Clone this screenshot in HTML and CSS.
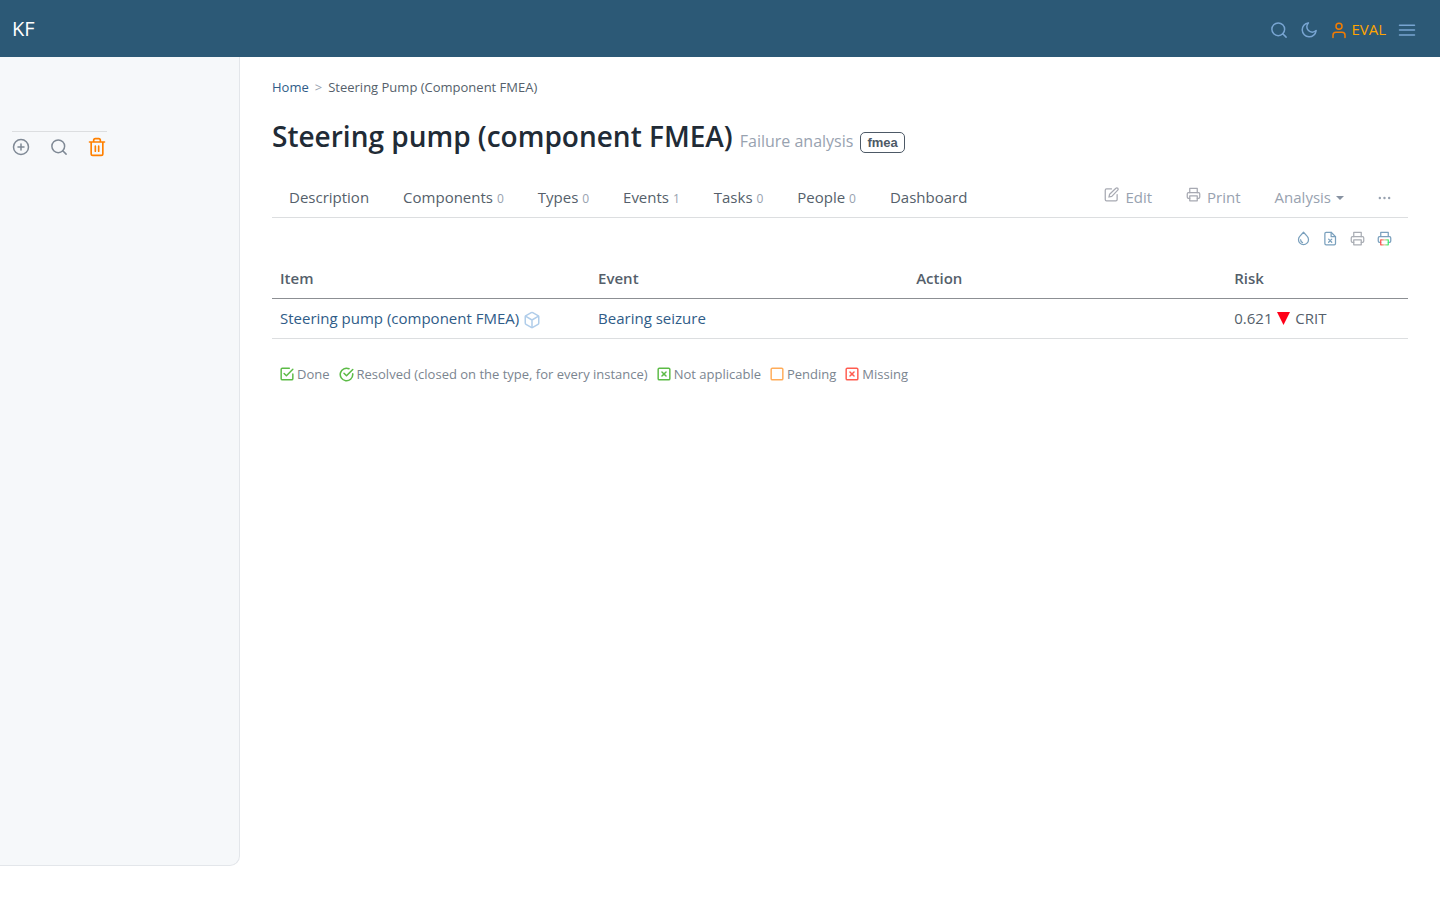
FILE: index.html
```html
<!DOCTYPE html>
<html lang="en">
<head>
    <meta charset="UTF-8">
    <meta name="viewport" content="width=device-width, initial-scale=1.0">
    <title>Steering pump (component FMEA)</title>
    <link rel="stylesheet" href="styles.css">
</head>
<body>
    <!-- shared icons -->
    <svg class="sprite" aria-hidden="true">
        <symbol id="i-search" viewBox="0 0 24 24"><circle cx="11" cy="11" r="8.500"/><path d="M21.500 21.500l-4.500-4.500"/></symbol>
        <symbol id="i-printer" viewBox="0 0 24 24"><path d="M6 9V2h12v7"/><path d="M6 18H4a2 2 0 0 1-2-2v-5a2 2 0 0 1 2-2h16a2 2 0 0 1 2 2v5a2 2 0 0 1-2 2h-2"/><rect x="6" y="14" width="12" height="8"/></symbol>
        <symbol id="i-xsquare" viewBox="0 0 24 24"><rect x="2" y="2" width="20" height="20" rx="2"/><path d="M8.500 8.500l7 7M15.500 8.500l-7 7"/></symbol>
    </svg>

    <header class="topbar">
        <a class="brand" href="#">KF</a>
        <nav class="topnav">
            <button aria-label="Search"><svg class="icon"><use href="#i-search"/></svg></button>
            <button aria-label="Dark mode"><svg class="icon" viewBox="0 0 24 24"><path d="M21.500 12.790A9.300 9.300 0 1 1 11.210 2.500 7.200 7.200 0 0 0 21.500 12.790z"/></svg></button>
            <a class="user" href="#"><svg class="icon" viewBox="0 0 24 24"><path d="M20 22v-3a4 4 0 0 0-4-4H8a4 4 0 0 0-4 4v3"/><circle cx="12" cy="7" r="4"/></svg>EVAL</a>
            <button aria-label="Menu"><svg class="icon" viewBox="0 0 24 24"><path d="M2 5.500h20M2 12h20M2 18.500h20"/></svg></button>
        </nav>
    </header>

    <div class="layout">
        <aside class="sidebar">
            <div class="side-tools">
                <button aria-label="Add"><svg class="icon" viewBox="0 0 24 24"><circle cx="12" cy="12" r="10"/><path d="M12 8v8M8 12h8"/></svg></button>
                <button aria-label="Search tree"><svg class="icon"><use href="#i-search"/></svg></button>
                <button class="trash" aria-label="Delete"><svg class="icon" viewBox="0 0 24 24"><path d="M3 6h18M19 6v14a2 2 0 0 1-2 2H7a2 2 0 0 1-2-2V6M8 6V4a2 2 0 0 1 2-2h4a2 2 0 0 1 2 2v2M10 11v6M14 11v6"/></svg></button>
            </div>
        </aside>

        <main class="content">
            <nav class="breadcrumb">
                <a href="#">Home</a><span class="sep">&gt;</span><span>Steering Pump (Component FMEA)</span>
            </nav>

            <div class="title">
                <h1>Steering pump (component FMEA)</h1>
                <span class="subtitle">Failure analysis</span>
                <a class="badge" href="#">fmea</a>
            </div>

            <nav class="tabs">
                <a href="#">Description</a>
                <a href="#">Components <small>0</small></a>
                <a href="#">Types <small>0</small></a>
                <a href="#">Events <small>1</small></a>
                <a href="#">Tasks <small>0</small></a>
                <a href="#">People <small>0</small></a>
                <a href="#">Dashboard</a>
                <div class="actions">
                    <a href="#"><svg class="icon" viewBox="0 0 24 24"><path d="M12 3H4a2 2 0 0 0-2 2v15a2 2 0 0 0 2 2h15a2 2 0 0 0 2-2v-8"/><path d="M19 2a2.100 2.100 0 0 1 3 3L12.500 15 8 16l1-4.500z"/></svg>Edit</a>
                    <a href="#"><svg class="icon"><use href="#i-printer"/></svg>Print</a>
                    <button class="dropdown">Analysis</button>
                    <button class="more" aria-label="More"><svg viewBox="0 0 14 4"><circle cx="2" cy="2" r="1.300"/><circle cx="7" cy="2" r="1.300"/><circle cx="12" cy="2" r="1.300"/></svg></button>
                </div>
            </nav>

            <div class="toolbar">
                <button aria-label="Colour"><svg class="icon" viewBox="0 0 24 24"><path d="M12 2l5.700 6.200a8 8 0 1 1-11.400 0z"/><path d="M7.500 14a4.500 4.500 0 0 0 3 4.500"/></svg></button>
                <button aria-label="Export spreadsheet"><svg class="icon" viewBox="0 0 24 24"><path d="M13 2H5a2 2 0 0 0-2 2v16a2 2 0 0 0 2 2h13a2 2 0 0 0 2-2V9z"/><path d="M13 2v7h7M9 13l5 5M14 13l-5 5"/></svg></button>
                <button class="gray" aria-label="Print"><svg class="icon"><use href="#i-printer"/></svg></button>
                <button aria-label="Print in colour"><svg class="icon" viewBox="0 0 24 24">
                    <defs><linearGradient id="paper" gradientUnits="userSpaceOnUse" x1="6" y1="0" x2="18" y2="0"><stop offset="0" stop-color="#ff4b4b"/><stop offset=".5" stop-color="#e0c8a0"/><stop offset="1" stop-color="#3df070"/></linearGradient></defs>
                    <path d="M6 9V2h12v7M6 18H4a2 2 0 0 1-2-2v-5a2 2 0 0 1 2-2h16a2 2 0 0 1 2 2v5a2 2 0 0 1-2 2h-2"/>
                    <rect x="6" y="14" width="12" height="8" stroke="url(#paper)"/></svg></button>
            </div>

            <table class="risks">
                <thead>
                    <tr><th>Item</th><th>Event</th><th>Action</th><th>Risk</th></tr>
                </thead>
                <tbody>
                    <tr>
                        <td><a href="#">Steering pump (component FMEA)</a> <svg class="icon cube" viewBox="0 0 24 24"><path d="M21 16V8a2 2 0 0 0-1-1.730l-7-4a2 2 0 0 0-2 0l-7 4A2 2 0 0 0 3 8v8a2 2 0 0 0 1 1.730l7 4a2 2 0 0 0 2 0l7-4A2 2 0 0 0 21 16z"/><path d="M3.270 6.960L12 12l8.730-5.040M12 22V12"/></svg></td>
                        <td><a href="#">Bearing seizure</a></td>
                        <td></td>
                        <td>0.621 <svg class="crit" viewBox="0 0 13 13"><path d="M0 0h13L6.500 13z"/></svg> CRIT</td>
                    </tr>
                </tbody>
            </table>

            <div class="legend">
                <span><svg class="icon green" viewBox="0 0 24 24"><path d="M7 11l4 4L22 4"/><path d="M22 12v8a2 2 0 0 1-2 2H4a2 2 0 0 1-2-2V4a2 2 0 0 1 2-2h12"/></svg>Done</span>
                <span><svg class="icon green round" viewBox="0 0 24 24"><path d="M22 11v1a10 10 0 1 1-6-9.150"/><path d="M22 4L12 14l-4-4"/></svg>Resolved (closed on the type, for every instance)</span>
                <span><svg class="icon green"><use href="#i-xsquare"/></svg>Not applicable</span>
                <span><svg class="icon orange" viewBox="0 0 24 24"><rect x="2" y="2" width="20" height="20" rx="2"/></svg>Pending</span>
                <span><svg class="icon red"><use href="#i-xsquare"/></svg>Missing</span>
            </div>
        </main>
    </div>
</body>
</html>
```
FILE: styles.css
```css
:root {
    --header: #2c5976;
    --text: #555f6b;
    --heading: #212b36;
    --link: #2f5c88;
    --muted: #98a2b0;
    --line: #dcdee0;
}

* {
    box-sizing: border-box;
}

body {
    margin: 0;
    font-family: "Open Sans", sans-serif;
    font-size: 15px;
    line-height: 23px;
    color: var(--text);
    background: #fff;
}

a {
    color: var(--link);
    text-decoration: none;
}

button {
    display: flex;
    padding: 0;
    border: none;
    background: none;
    color: inherit;
    font: inherit;
    cursor: pointer;
}

.sprite {
    display: none;
}

.icon {
    width: 18px;
    height: 18px;
    flex: none;
    fill: none;
    stroke: currentColor;
    stroke-width: 2;
    stroke-linecap: round;
    stroke-linejoin: round;
}

.topbar {
    display: flex;
    justify-content: space-between;
    align-items: center;
    height: 57px;
    padding: 0 24px 0 12px;
    background: var(--header);
}

.brand {
    color: #fff;
    font-size: 20px;
}

.topnav {
    display: flex;
    align-items: center;
    gap: 12px;
    color: #78a5d2;
}

.topnav .icon {
    margin-top: 2px;
}

.user {
    display: flex;
    align-items: center;
    gap: 3px;
    color: #ffa500;
    line-height: 20px;
}

.user .icon {
    color: #f57c00;
}

.layout {
    display: flex;
    align-items: flex-start;
}

.sidebar {
    width: 240px;
    flex: none;
    min-height: calc(100vh - 91px);
    padding: 74px 12px 0;
    background: #f6f8fa;
    border: solid #e3e6ea;
    border-width: 0 1px 1px 0;
    border-bottom-right-radius: 10px;
}

.side-tools {
    display: flex;
    justify-content: space-between;
    align-items: center;
    width: 95px;
    padding-top: 5px;
    border-top: 1px solid var(--line);
    color: #7f8995;
}

.trash {
    color: #ff8000;
}

.trash .icon {
    width: 20px;
    height: 20px;
}

.content {
    flex: 1;
    min-width: 0;
    padding: 20px 32px;
}

.breadcrumb {
    display: flex;
    gap: 6px;
    font-size: 13px;
    line-height: 20px;
}

.sep {
    color: var(--muted);
}

.title {
    display: flex;
    align-items: baseline;
    gap: 7px;
    margin-top: 20px;
}

h1 {
    margin: 0;
    font-size: 28px;
    font-weight: 600;
    line-height: 38px;
    color: var(--heading);
}

.subtitle {
    font-size: 16px;
    color: var(--muted);
}

.badge {
    padding: 0 6px;
    border: 1px solid #4d5966;
    border-radius: 5px;
    font-family: "Liberation Sans", sans-serif;
    font-size: 13px;
    font-weight: 700;
    line-height: 19px;
    color: #4d5966;
}

.tabs {
    display: flex;
    align-items: flex-start;
    margin-top: 22px;
    border-bottom: 1px solid var(--line);
}

.tabs a,
.tabs button {
    padding: 9px 17px 8px;
    color: var(--text);
    white-space: nowrap;
}

.tabs small {
    font-size: 12px;
    line-height: 16px;
    color: var(--muted);
}

.actions {
    display: flex;
    margin-left: auto;
}

.tabs .actions a,
.tabs .actions button {
    color: var(--muted);
}

.actions a {
    display: flex;
    gap: 6px;
}

.actions .icon {
    width: 15px;
    height: 15px;
    margin-top: 1px;
    color: #a7a9b2;
}

.dropdown {
    align-items: center;
    gap: 5px;
}

.dropdown::after {
    content: "";
    border: 4px solid transparent;
    border-top-color: #8792a2;
    border-bottom: 0;
}

.tabs .more {
    align-items: center;
}

.more svg {
    width: 13px;
    height: 4px;
    fill: currentColor;
}

.toolbar {
    display: flex;
    justify-content: flex-end;
    gap: 12px;
    padding: 13px 16px;
    color: #7aa0bd;
}

.toolbar .icon {
    width: 15px;
    height: 15px;
}

.gray {
    color: #a9adb4;
}

.risks {
    width: 100%;
    table-layout: fixed;
    border-collapse: collapse;
}

.risks th,
.risks td {
    padding: 8px;
    text-align: left;
    border-bottom: 1px solid var(--line);
}

.risks th {
    width: 28%;
    font-weight: 600;
    border-bottom-color: #8c8f93;
}

.risks th:last-child {
    width: 16%;
}

.cube {
    vertical-align: -5px;
    color: #b0cdea;
}

.crit {
    width: 13px;
    height: 13px;
    margin: 0 1px;
    vertical-align: -1px;
    fill: #ff0018;
}

.legend {
    display: flex;
    gap: 9px;
    margin-top: 25px;
    padding: 0 8px;
    font-size: 13px;
    line-height: 20px;
    color: #7b8590;
}

.legend span {
    display: flex;
    align-items: center;
    gap: 3px;
}

.legend .icon {
    width: 14px;
    height: 14px;
    stroke-width: 2.5;
}

.legend .round {
    width: 15px;
    height: 15px;
}

.green {
    color: #5cbb46;
}

.orange {
    color: #ffac59;
}

.red {
    color: #ff5c50;
}
```
